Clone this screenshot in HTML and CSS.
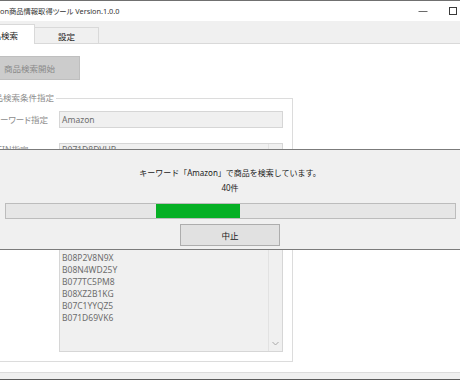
FILE: index.html
```html
<!DOCTYPE html>
<html lang="ja">
<head>
  <meta charset="UTF-8">
  <title>Amazon商品情報取得ツール</title>
  <link rel="stylesheet" href="styles.css">
</head>
<body>

  <div class="window">
    <div class="titlebar">
      <span class="title">Amazon商品情報取得ツール Version.1.0.0</span>
      <div class="controls">
        <span class="ctl">
          <svg width="10" height="10" viewBox="0 0 10 10"><path d="M0.5 5.5h9" stroke="#6a6a6a" stroke-width="1"/></svg>
        </span>
        <span class="ctl">
          <svg width="9" height="9" viewBox="0 0 9 9"><rect x="0.5" y="0.5" width="7" height="7" fill="none" stroke="#3a3a3a" stroke-width="1"/></svg>
        </span>
        <span class="ctl">
          <svg width="10" height="10" viewBox="0 0 10 10"><path d="M1 1l8 8M9 1l-8 8" stroke="#3a3a3a" stroke-width="1"/></svg>
        </span>
      </div>
    </div>

    <div class="tabs">
      <div class="tab active">商品検索</div>
      <div class="tab">設定</div>
    </div>

    <div class="page">
      <button class="btn start" disabled>商品検索開始</button>

      <fieldset class="group">
        <legend>商品検索条件指定</legend>
        <div class="row">
          <label class="lbl">キーワード指定</label>
          <div class="field">Amazon</div>
        </div>
        <div class="row top">
          <label class="lbl">ASIN指定</label>
          <div class="memo">
            <div class="lines">
              <div>B071D8DVHB</div>
              <div>B08CXY9ZQF</div>
              <div>B07Q4N6JYH</div>
              <div>B08KHL2J5X</div>
              <div>B07ZPML7NP</div>
              <div>B0863TXGM3</div>
              <div>B08L5TNJHG</div>
              <div>B07X6C9RMF</div>
              <div>B08FC5L3RG</div>
              <div>B08P2V8N9X</div>
              <div>B08N4WD25Y</div>
              <div>B077TC5PM8</div>
              <div>B08XZ2B1KG</div>
              <div>B07C1YYQZ5</div>
              <div>B071D69VK6</div>
            </div>
            <div class="scroll">
              <svg width="7" height="5" viewBox="0 0 7 5"><path d="M0.5 1l3 3 3-3" fill="none" stroke="#a8a8a8" stroke-width="1"/></svg>
            </div>
          </div>
        </div>
      </fieldset>
    </div>

    <div class="statusbar"></div>
  </div>

  <div class="dialog">
    <div class="msg">キーワード「Amazon」で商品を検索しています。</div>
    <div class="msg">40件</div>
    <div class="progress">
      <div class="chunk" style="margin-left: 150px; width: 84px;"></div>
    </div>
    <button class="btn stop">中止</button>
  </div>

</body>
</html>
```

FILE: styles.css
```css
body {
  margin: 0;
  width: 460px;
  height: 380px;
  overflow: hidden;
  position: relative;
  background: #fff;
  font-family: "Noto Sans", "Noto Sans CJK JP", sans-serif;
  font-size: 8.5px;
  font-feature-settings: "palt";
  color: #222;
}
.window {
  width: 532px;
  height: 380px;
  margin-left: -34px;
  display: flex;
  flex-direction: column;
  box-sizing: border-box;
  border-top: 1px solid #707070;
  border-bottom: 1px solid #5c5c5c;
}
.titlebar {
  flex: none;
  height: 20px;
  display: flex;
  align-items: center;
  justify-content: space-between;
}
.title {
  padding-left: 15px;
  font-size: 7.3px;
  color: #333;
  white-space: nowrap;
}
.controls {
  display: flex;
  height: 20px;
}
.ctl {
  width: 30px;
  display: flex;
  align-items: center;
  justify-content: center;
}
.tabs {
  flex: none;
  height: 22px;
  display: flex;
  align-items: flex-end;
  padding-left: 1px;
  background: #f0f0f0;
  border-bottom: 1px solid #d9d9d9;
}
.tab {
  width: 64px;
  height: 16px;
  box-sizing: border-box;
  border: 1px solid #d9d9d9;
  border-bottom: none;
  display: flex;
  align-items: center;
  justify-content: center;
  color: #222;
}
.tab + .tab {
  border-left: none;
}
.tab.active {
  width: 68px;
  height: 20px;
  margin-bottom: -1px;
  background: #fff;
}
.page {
  flex: 1;
  padding: 12px 0 0 10px;
}
.btn {
  font: inherit;
  padding: 0;
  box-sizing: border-box;
}
.start {
  display: block;
  margin-left: 3px;
  width: 101px;
  height: 24px;
  background: #cccccc;
  border: 1px solid #bfbfbf;
  color: #8a8a8a;
}
.group {
  box-sizing: border-box;
  width: 317px;
  min-width: 0;
  margin: 12px 0 0;
  padding: 7px 0 9px 15px;
  border: 1px solid #dcdcdc;
}
.group legend {
  line-height: 12px;
  padding: 0 2px;
  margin-left: -8px;
  color: #8d8d8d;
}
.row {
  display: flex;
  align-items: center;
}
.row.top {
  align-items: flex-start;
  margin-top: 15px;
}
.lbl {
  flex: none;
  width: 67px;
  line-height: 12px;
  color: #8d8d8d;
}
.row.top .lbl {
  padding-top: 1px;
}
.field {
  width: 224px;
  height: 17px;
  box-sizing: border-box;
  padding-left: 2px;
  display: flex;
  align-items: center;
  border: 1px solid #d6d6d6;
  background: #f0f0f0;
  color: #6d6d6d;
}
.memo {
  width: 224px;
  height: 209px;
  box-sizing: border-box;
  display: flex;
  overflow: hidden;
  border: 1px solid #d6d6d6;
  background: #f0f0f0;
}
.lines {
  flex: 1;
  padding-left: 2px;
  line-height: 12px;
  color: #6d6d6d;
}
.scroll {
  width: 13px;
  border-left: 1px solid #e2e2e2;
  display: flex;
  align-items: flex-end;
  justify-content: center;
  padding-bottom: 5px;
}
.statusbar {
  flex: none;
  height: 6px;
  border-top: 1px solid #dcdcdc;
  background: #f0f0f0;
}
.dialog {
  position: absolute;
  left: 0;
  right: 0;
  top: 149px;
  height: 101px;
  box-sizing: border-box;
  padding-top: 15px;
  display: flex;
  flex-direction: column;
  border-top: 1px solid #7b7b7b;
  border-bottom: 1px solid #7b7b7b;
  background: #f0f0f0;
  text-align: center;
  color: #1a1a1a;
}
.msg {
  line-height: 15px;
  font-size: 8px;
  font-feature-settings: normal;
}
.progress {
  height: 16px;
  margin: 8px 4px 0 5px;
  box-sizing: border-box;
  display: flex;
  border: 1px solid #bcbcbc;
  background: #e6e6e6;
}
.chunk {
  background: #06b025;
}
.stop {
  width: 100px;
  height: 22px;
  margin: 5px auto 0;
  background: #e1e1e1;
  border: 1px solid #adadad;
  color: #1a1a1a;
}
```
